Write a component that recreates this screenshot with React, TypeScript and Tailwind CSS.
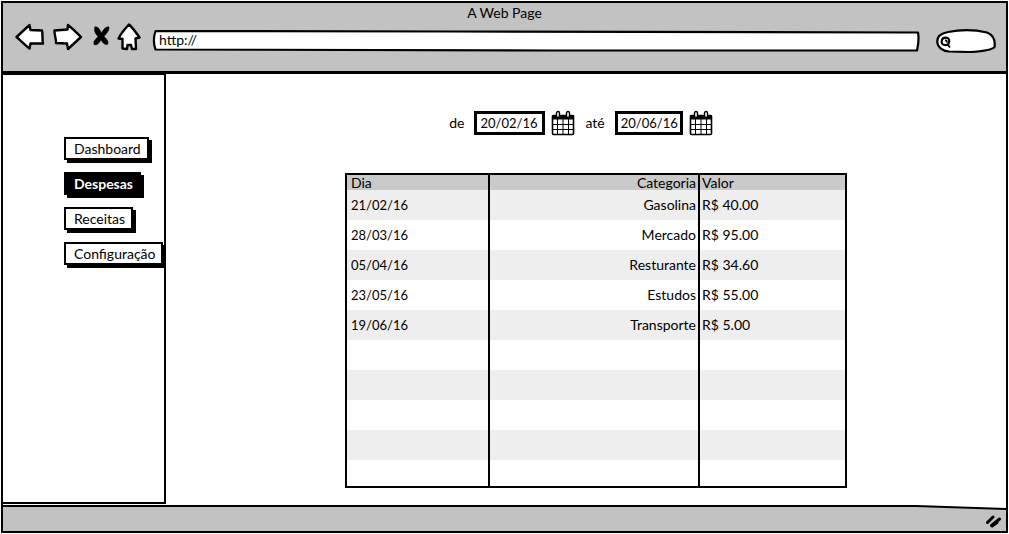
import type { ReactNode } from "react";

const menu = ["Dashboard", "Despesas", "Receitas", "Configuração"];

const expenses = [
  { day: "21/02/16", category: "Gasolina", value: "R$ 40.00" },
  { day: "28/03/16", category: "Mercado", value: "R$ 95.00" },
  { day: "05/04/16", category: "Resturante", value: "R$ 34.60" },
  { day: "23/05/16", category: "Estudos", value: "R$ 55.00" },
  { day: "19/06/16", category: "Transporte", value: "R$ 5.00" },
];

const emptyRows = ["h-[30px]", "h-[30px]", "h-[30px]", "h-[30px]", "h-[26px]"];

function NavButton({ label, width, children }: { label: string; width: number; children: ReactNode }) {
  return (
    <button type="button" aria-label={label} className="block">
      <svg
        width={width}
        height="28"
        viewBox={`0 0 ${width} 28`}
        fill="#fff"
        stroke="#000"
        strokeWidth="2.4"
        strokeLinejoin="round"
        strokeLinecap="round"
        aria-hidden="true"
      >
        {children}
      </svg>
    </button>
  );
}

function CalendarIcon() {
  return (
    <svg width="24" height="26" viewBox="0 0 24 26" aria-hidden="true">
      <rect x="1.5" y="5.5" width="21" height="19" rx="1" fill="#fff" stroke="#000" strokeWidth="1.6" />
      <path d="M1 5h22v4.500H1z" fill="#000" />
      <path d="M6.500 9v15M12 9v15M17.500 9v15M2 14.500h20M2 19.500h20" stroke="#000" strokeWidth="1" />
      <rect x="5.500" y="1.500" width="3" height="6" rx="1.500" fill="#fff" stroke="#000" strokeWidth="1.400" />
      <rect x="15.500" y="1.500" width="3" height="6" rx="1.500" fill="#fff" stroke="#000" strokeWidth="1.400" />
    </svg>
  );
}

function DateField({ id, label, value, width }: { id: string; label: string; value: string; width: string }) {
  return (
    <div className="flex items-center">
      <label htmlFor={id} className="mr-2.5">
        {label}
      </label>
      <input
        id={id}
        type="text"
        defaultValue={value}
        className={`h-6 border-3 border-black bg-white pl-[3px] text-[13px] outline-none ${width}`}
      />
      <button type="button" aria-label={`Calendário: ${label}`} className="ml-1.5 block">
        <CalendarIcon />
      </button>
    </div>
  );
}

export default function App() {
  return (
    <div className="flex min-h-screen flex-col bg-white p-px font-['Lato','Noto_Sans',sans-serif] text-sm leading-5 text-black">
      <div className="flex flex-1 flex-col border-2 border-black">
        <header className="border-b-3 border-black bg-[#c2c2c2] pb-3">
          <h1 className="text-center">A Web Page</h1>
          <div className="flex h-9 items-center pr-2.5 pl-3">
            <nav aria-label="Navegador" className="flex items-start self-start">
              <NavButton label="Voltar" width={30}>
                <path d="M1.500 14 14.500 2 15.500 7 27 7.500C28 12 27 16 28 20.500L15.500 20.500 14.500 25.500C10 22 6 18 1.500 14Z" />
              </NavButton>
              <span className="w-2" />
              <NavButton label="Avançar" width={30}>
                <path d="M1.500 7.500 14.500 6.500 15 2C19.500 5.500 24 10 28 14L15 26 14 20.500 3 20C3.500 16 1 12 1.500 7.500Z" />
              </NavButton>
              <span className="w-1.5" />
              <NavButton label="Parar" width={24}>
                <path
                  d="M6 4C9 3 11 7 12.500 10C14 7 17 3 20 4C20.500 8 17 11 15 13.500C18 16 20 19 18.500 21.500C15 22 13.500 19 12 17C10 20 8 23 5 21.500C4 18 7 16 9 13.500C6.500 11 4.500 7.500 6 4Z"
                  fill="#000"
                  strokeWidth="0.5"
                />
              </NavButton>
              <NavButton label="Início" width={30}>
                <path d="M16 1.500C20 5 23 9.500 26.500 14.500L22.500 15.500 23 26 19 26 18 22 14.500 22 14 26 9.500 25.500 9.500 16 5.500 15.500C8 10 12 6 16 1.500Z" />
              </NavButton>
            </nav>
            <div className="relative ml-2.5 h-[22px] min-w-0 flex-1">
              <svg
                className="absolute inset-0 h-full w-full overflow-visible"
                viewBox="0 0 768 22"
                preserveAspectRatio="none"
                fill="#fff"
                stroke="#000"
                strokeWidth="2.200"
                strokeLinejoin="round"
                aria-hidden="true"
              >
                <path d="M2.500 1 300 1.500 766 2.500C767 8 766.500 14 765 20.500L400 20.500 2.500 19.500C.5 14 .5 7 2.500 1Z" />
              </svg>
              <input
                type="text"
                aria-label="Endereço"
                defaultValue="http://"
                className="relative block h-5 w-full bg-transparent px-1.5 outline-none"
              />
            </div>
            <div className="relative ml-4 h-6 w-[60px]">
              <svg className="absolute inset-0" width="60" height="24" viewBox="0 0 60 24" fill="#fff" stroke="#000" strokeWidth="2.200" aria-hidden="true">
                <path d="M12 3C24 .7 40 .9 51 3.500C57 6 59.500 11 58.500 18C55 21.500 44 22.500 34 23L13 22.500C6 22 1.500 18 1.200 12.500C1.200 7 6 4 12 3Z" />
                <path d="M6 11C7 8 12 8 13 10.500C14 14 12 16.500 9 16C6 16 5 13.500 6 11Z" />
                <path d="M9 11.500C10.500 11 11.500 12.500 10.500 13.500M11.500 15.500 14 18.500" strokeWidth="1.800" />
              </svg>
              <input type="search" aria-label="Buscar" className="relative h-full w-full bg-transparent pr-2 pl-4 outline-none" />
            </div>
          </div>
        </header>

        <div className="flex flex-1">
          <aside className="mb-px w-[163px] shrink-0 border-t border-r-2 border-b-2 border-black">
            <nav aria-label="Menu" className="flex flex-col items-start gap-3 pt-[62px] pl-[61px]">
              {menu.map((item) => (
                <button
                  key={item}
                  type="button"
                  className={`h-[23px] border-2 border-black pr-1.5 pl-2 leading-[19px] whitespace-nowrap shadow-[3px_3px_0_#000] ${
                    item === "Despesas" ? "bg-black font-bold text-white" : "bg-white"
                  }`}
                >
                  {item}
                </button>
              ))}
            </nav>
          </aside>

          <main className="grid flex-1 grid-cols-[179fr_502fr_159fr] pt-9 pb-4">
            <div className="col-start-2">
              <form className="flex justify-center gap-2.5 pr-[30px]">
                <DateField id="from" label="de" value="20/02/16" width="w-[71px]" />
                <DateField id="to" label="até" value="20/06/16" width="w-[68px]" />
              </form>

              <div className="mt-[37px] border-2 border-black">
                <table className="w-full table-fixed border-collapse">
                  <colgroup>
                    <col className="w-[142px]" />
                    <col className="w-[210px]" />
                    <col />
                  </colgroup>
                  <thead>
                    <tr className="h-[15px] bg-[#cacaca] leading-[15px]">
                      <th scope="col" className="border-r-2 border-black p-0 pl-1 text-left font-normal">Dia</th>
                      <th scope="col" className="border-r-2 border-black p-0 pr-0.5 text-right font-normal">Categoria</th>
                      <th scope="col" className="p-0 pl-0.5 text-left font-normal">Valor</th>
                    </tr>
                  </thead>
                  <tbody>
                    {expenses.map((row) => (
                      <tr key={row.day} className="h-[30px] odd:bg-[#eeeeee]">
                        <td className="border-r-2 border-black p-0 pl-1 text-[13px]">{row.day}</td>
                        <td className="border-r-2 border-black p-0 pr-0.5 text-right">{row.category}</td>
                        <td className="p-0 pl-0.5">{row.value}</td>
                      </tr>
                    ))}
                    {emptyRows.map((height, index) => (
                      <tr key={index} className={`odd:bg-[#eeeeee] ${height}`}>
                        <td className="border-r-2 border-black p-0" />
                        <td className="border-r-2 border-black p-0" />
                        <td className="p-0" />
                      </tr>
                    ))}
                  </tbody>
                </table>
              </div>
            </div>
          </main>
        </div>

        <footer className="relative flex h-[26px] items-center justify-end border-t-2 border-black bg-[#c2c2c2] pt-1 pr-1">
          <svg className="absolute -top-0.5 right-0" width="160" height="6" viewBox="0 0 160 6" aria-hidden="true">
            <path d="M0 0H160V4L80 1Z" fill="#fff" />
            <path d="M0 1 70 1 160 4" fill="none" stroke="#000" strokeWidth="2" />
          </svg>
          <svg width="17" height="14" viewBox="0 0 17 14" fill="none" stroke="#000" strokeWidth="3" strokeLinecap="round" aria-hidden="true">
            <path d="M2.500 8.500 8 3M6.500 11.500 14.500 5M7 12 12 8.500" />
          </svg>
        </footer>
      </div>
    </div>
  );
}
